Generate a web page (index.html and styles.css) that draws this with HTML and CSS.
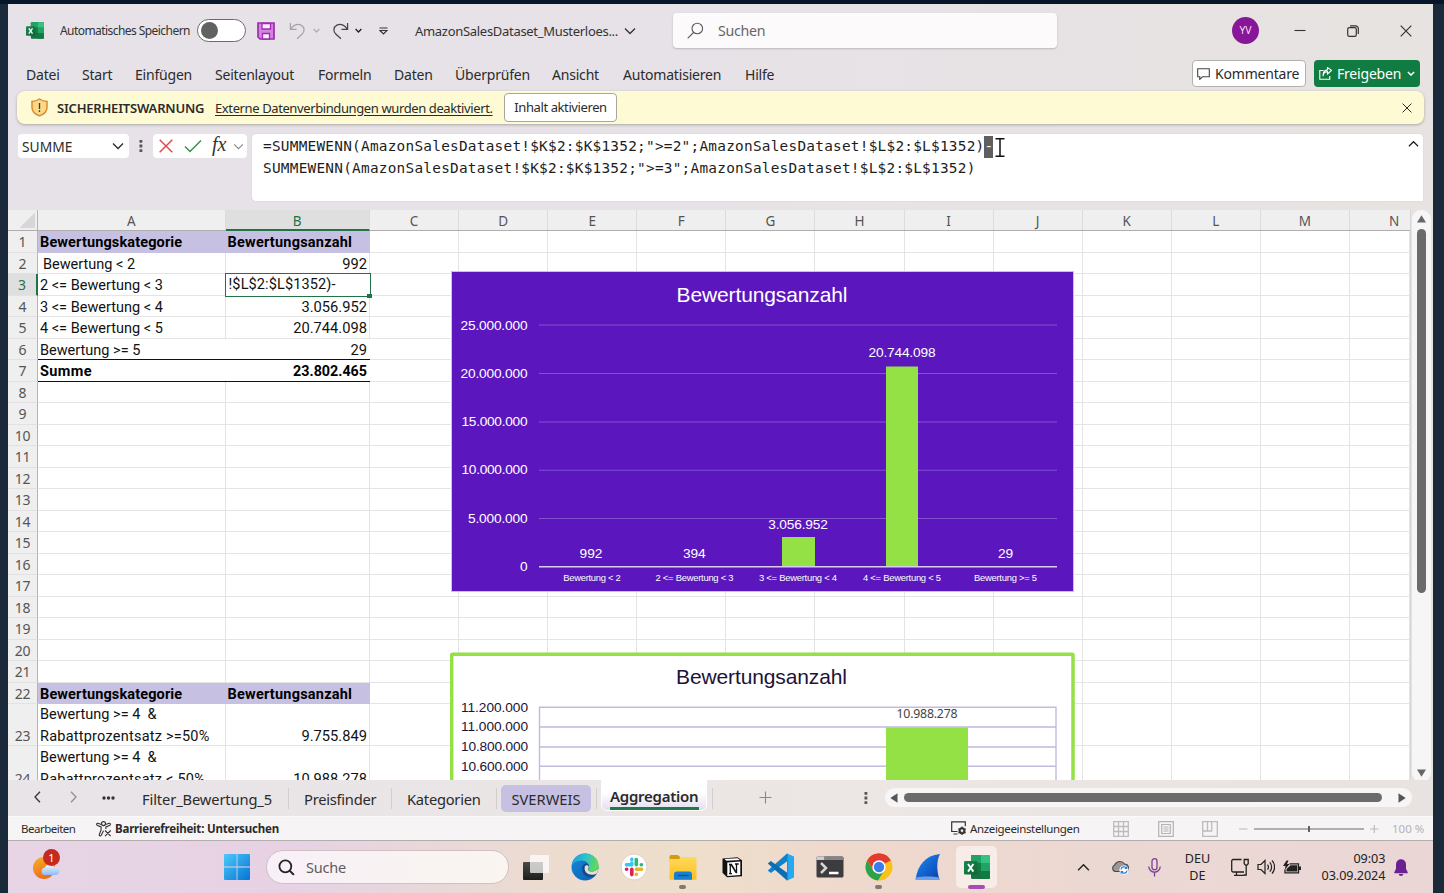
FILE: index.html
```html
<!DOCTYPE html>
<html lang="de">
<head>
<meta charset="utf-8">
<title>AmazonSalesDataset_Musterloesung - Excel</title>
<link rel="stylesheet" href="styles.css">
</head>
<body>
<svg class="defs" width="0" height="0">
  <defs>
    <linearGradient id="xlg" x1="0" y1="0" x2="1" y2="1"><stop offset="0" stop-color="#18884f"/><stop offset="1" stop-color="#0b6731"/></linearGradient>
    <linearGradient id="wing" x1="0" y1="0" x2="1" y2="1"><stop offset="0" stop-color="#4cc9fb"/><stop offset="1" stop-color="#0474d2"/></linearGradient>
    <linearGradient id="sung" x1="0" y1="0" x2=".4" y2="1"><stop offset="0" stop-color="#f6b02c"/><stop offset="1" stop-color="#ee6d1c"/></linearGradient>
    <linearGradient id="cldg" x1="0" y1="0" x2="0" y2="1"><stop offset="0" stop-color="#eef5fe"/><stop offset="1" stop-color="#8fbcf3"/></linearGradient>
    <linearGradient id="tv1" x1="0" y1="0" x2="0" y2="1"><stop offset="0" stop-color="#4a4a48"/><stop offset="1" stop-color="#1d1d1b"/></linearGradient>
    <linearGradient id="edg1" x1="0" y1=".3" x2="1" y2=".5"><stop offset="0" stop-color="#1b9de2"/><stop offset=".5" stop-color="#2fc2c9"/><stop offset="1" stop-color="#63dd4c"/></linearGradient>
    <linearGradient id="edg2" x1="0" y1="0" x2="1" y2="1"><stop offset="0" stop-color="#1389dc"/><stop offset="1" stop-color="#0d5cae"/></linearGradient>
    <linearGradient id="fold" x1="0" y1="0" x2="0" y2="1"><stop offset="0" stop-color="#ffd95a"/><stop offset="1" stop-color="#fbbf22"/></linearGradient>
    <linearGradient id="fin" x1="0" y1="0" x2="1" y2="1"><stop offset="0" stop-color="#1b8cf5"/><stop offset="1" stop-color="#0b3fae"/></linearGradient>
    <symbol id="excel" viewBox="0 0 26 26">
      <rect x="7" y="1" width="19" height="24" rx="1.500" fill="#1a6f43"/>
      <path d="M7 1h10v8H7z" fill="#21a366"/><path d="M17 1h7.500A1.500 1.500 0 0 1 26 2.500V9h-9z" fill="#33c481"/>
      <path d="M7 9h10v8H7z" fill="#107c41"/><path d="M17 9h9v8h-9z" fill="#21a366"/><path d="M17 17h9v6.500a1.500 1.500 0 0 1-1.500 1.500H17z" fill="#107c41"/>
      <rect x="0" y="7" width="13.500" height="13.500" rx="1.300" fill="url(#xlg)"/>
      <path d="M4 10l5.400 7.600M9.400 10L4 17.600" stroke="#fff" stroke-width="1.900" fill="none"/>
    </symbol>
    <symbol id="chev" viewBox="0 0 12 8"><path d="M1 1.500l5 5 5-5" fill="none" stroke="currentColor" stroke-width="1.300"/></symbol>
    <symbol id="chevb" viewBox="0 0 12 8"><path d="M1 1.500l5 5 5-5" fill="none" stroke="currentColor" stroke-width="2.400"/></symbol>
    <symbol id="cross" viewBox="0 0 12 12"><path d="M.7.7l10.600 10.600M11.300.7L.7 11.300" fill="none" stroke="currentColor" stroke-width="1.200"/></symbol>
  </defs>
</svg>

<div class="window">
  <header class="titlebar">
    <svg class="t-excel"><use href="#excel"/></svg>
    <span class="t-auto">Automatisches Speichern</span>
    <span class="toggle"><i></i></span>
    <svg class="t-save" viewBox="0 0 18 18"><path d="M1 1h16v16H3l-2-2z" fill="#cf86dc" stroke="#a02bb0" stroke-width="1.700"/><path d="M5 1.500h8.500v5.500H5zM5.500 11.500h7V17h-7z" fill="#f9eefb" stroke="#a02bb0" stroke-width="1.300"/></svg>
    <svg class="t-undo" viewBox="0 0 18 18"><path d="M1.500.5v6.800H8M1.700 7C4.500 2.800 9 .8 12.800 2.800c4 2.200 4 6.800 1.200 9.400L8.500 17.200" fill="none" stroke="#a5a2a5" stroke-width="1.300"/></svg>
    <svg class="t-ch1"><use href="#chevb"/></svg>
    <svg class="t-redo" viewBox="0 0 18 18"><path d="M16.500.5v6.800H10M16.300 7C13.500 2.800 9 .8 5.200 2.800c-4 2.200-4 6.800-1.200 9.400l5.500 5" fill="none" stroke="#444" stroke-width="1.300"/></svg>
    <svg class="t-ch2"><use href="#chevb"/></svg>
    <svg class="t-qat" viewBox="0 0 9 8"><path d="M.5 1h8M1 3.500l3.500 3.500L8 3.500z" fill="none" stroke="#333" stroke-width="1.200"/></svg>
    <span class="t-doc">AmazonSalesDataset_Musterloes...</span>
    <svg class="t-ch3"><use href="#chev"/></svg>
    <div class="search"><svg viewBox="0 0 17 17"><circle cx="10.300" cy="6.500" r="5.300" fill="none" stroke="#5b5b5b" stroke-width="1.100"/><path d="M6.500 10.500L.7 16.300" stroke="#5b5b5b" stroke-width="1.100"/></svg><span>Suchen</span></div>
    <span class="avatar">YV</span>
    <svg class="t-min" viewBox="0 0 12 12"><path d="M.5 5.500h11" stroke="#333" stroke-width="1.100"/></svg>
    <svg class="t-res" viewBox="0 0 12 12"><rect x=".7" y="2.700" width="8.600" height="8.600" rx="1.600" fill="none" stroke="#333" stroke-width="1.200"/><path d="M3 .8h5.500a2.800 2.800 0 0 1 2.800 2.800V9" fill="none" stroke="#333" stroke-width="1.200"/></svg>
    <svg class="t-close"><use href="#cross"/></svg>
  </header>

  <nav class="menu">
    <span>Datei</span><span>Start</span><span>Einfügen</span><span>Seitenlayout</span><span>Formeln</span><span>Daten</span><span>Überprüfen</span><span>Ansicht</span><span>Automatisieren</span><span>Hilfe</span>
    <div class="btn comments"><svg viewBox="0 0 13 12"><path d="M.7.8h11.600v8H5.500L2.800 11.300V8.800H.7z" fill="none" stroke="#444" stroke-width="1.100"/></svg><b>Kommentare</b></div>
    <div class="btn share"><svg viewBox="0 0 13 13"><path d="M4.500 3.500H.8v8.700h10V9M4 9.200c.3-3 2-4.500 4.500-4.600V7l4-3.600L8.500.6v2.300C5.500 3 4 5.500 4 9.200z" fill="none" stroke="#fff" stroke-width="1.100"/></svg><b>Freigeben</b><svg class="sc"><use href="#chevb"/></svg></div>
  </nav>

  <div class="warning">
    <svg class="shield" viewBox="0 0 17 19"><path d="M8.500 1c2.300 1.600 4.700 2.300 7.500 2.400v5.800c0 4.200-2.800 7-7.500 8.700C3.800 16.200 1 13.400 1 9.200V3.400C3.800 3.300 6.200 2.600 8.500 1z" fill="#fbd98a" stroke="#dd8a2c" stroke-width="1.500"/><path d="M8.500 5v6M8.500 12.300v1.700" stroke="#4b3a20" stroke-width="1.300"/></svg>
    <strong>SICHERHEITSWARNUNG</strong>
    <u>Externe Datenverbindungen wurden deaktiviert.</u>
    <span class="enable">Inhalt aktivieren</span>
    <svg class="wx"><use href="#cross"/></svg>
  </div>

  <div class="formula">
    <div class="namebox"><span>SUMME</span><svg><use href="#chev"/></svg></div>
    <svg class="vdots" viewBox="0 0 4 14"><path d="M.5 1h2.800v2.800H.5zM.5 5.600h2.800v2.800H.5zM.5 10.200h2.800V13H.5z" fill="#555"/></svg>
    <div class="fx">
      <svg class="no" viewBox="0 0 14 14"><path d="M.7.7l12.600 12.600M13.300.7L.7 13.300" stroke="#e2434b" stroke-width="1.400"/></svg>
      <svg class="ok" viewBox="0 0 18 14"><path d="M1 7.500L6 12.500 17 1.500" fill="none" stroke="#35914f" stroke-width="1.500"/></svg>
      <em>fx</em>
      <svg class="fc"><use href="#chev"/></svg>
    </div>
    <div class="input">
      <div>=SUMMEWENN(AmazonSalesDataset!$K$2:$K$1352;"&gt;=2";AmazonSalesDataset!$L$2:$L$1352)<mark>-</mark><svg class="ibeam" viewBox="0 0 10 19"><path d="M.5.8h9M.5 18.200h9M5 1v17" fill="none" stroke="#111" stroke-width="1.500"/></svg></div>
      <div>SUMMEWENN(AmazonSalesDataset!$K$2:$K$1352;"&gt;=3";AmazonSalesDataset!$L$2:$L$1352)</div>
      <svg class="collapse"><use href="#chev"/></svg>
    </div>
  </div>

  <div class="work">
    <div class="sheet">
      <div class="cols"><b class="corner"></b><span>A</span><span class="on">B</span><span>C</span><span>D</span><span>E</span><span>F</span><span>G</span><span>H</span><span>I</span><span>J</span><span>K</span><span>L</span><span>M</span><span>N</span></div>
      <div class="row head"><b>1</b><i>Bewertungskategorie</i><i>Bewertungsanzahl</i><i></i></div>
      <div class="row"><b>2</b><i class="ind">Bewertung &lt; 2</i><i>992</i><i></i></div>
      <div class="row"><b class="on">3</b><i>2 &lt;= Bewertung &lt; 3</i><i class="edit">!$L$2:$L$1352)-</i><i></i></div>
      <div class="row"><b>4</b><i>3 &lt;= Bewertung &lt; 4</i><i>3.056.952</i><i></i></div>
      <div class="row"><b>5</b><i>4 &lt;= Bewertung &lt; 5</i><i>20.744.098</i><i></i></div>
      <div class="row line"><b>6</b><i>Bewertung &gt;= 5</i><i>29</i><i></i></div>
      <div class="row line sum"><b>7</b><i>Summe</i><i>23.802.465</i><i></i></div>
      <div class="row"><b>8</b><i></i><i></i><i></i></div>
      <div class="row"><b>9</b><i></i><i></i><i></i></div>
      <div class="row"><b>10</b><i></i><i></i><i></i></div>
      <div class="row"><b>11</b><i></i><i></i><i></i></div>
      <div class="row"><b>12</b><i></i><i></i><i></i></div>
      <div class="row"><b>13</b><i></i><i></i><i></i></div>
      <div class="row"><b>14</b><i></i><i></i><i></i></div>
      <div class="row"><b>15</b><i></i><i></i><i></i></div>
      <div class="row"><b>16</b><i></i><i></i><i></i></div>
      <div class="row"><b>17</b><i></i><i></i><i></i></div>
      <div class="row"><b>18</b><i></i><i></i><i></i></div>
      <div class="row"><b>19</b><i></i><i></i><i></i></div>
      <div class="row"><b>20</b><i></i><i></i><i></i></div>
      <div class="row"><b>21</b><i></i><i></i><i></i></div>
      <div class="row head"><b>22</b><i>Bewertungskategorie</i><i>Bewertungsanzahl</i><i></i></div>
      <div class="row tall"><b>23</b><i>Bewertung &gt;= 4&nbsp; &amp;<br><span>Rabattprozentsatz &gt;=50%</span></i><i>9.755.849</i><i></i></div>
      <div class="row tall last"><b>24</b><i>Bewertung &gt;= 4&nbsp; &amp;<br><span>Rabattprozentsatz &lt; 50%</span></i><i>10.988.278</i><i></i></div>

      <svg class="chart one" viewBox="451 271 623 321" width="623" height="321">
        <rect x="451.500" y="271.500" width="622" height="320" fill="#5b17bd" stroke="#c9c3dc"/>
        <path d="M539 325h518M539 373.500h518M539 422h518M539 470.300h518M539 518.500h518" stroke="#8350d0" stroke-width="1.100"/>
        <rect x="782" y="537" width="33" height="30" fill="#93e145"/>
        <rect x="886" y="366.500" width="32" height="200" fill="#93e145"/>
        <path d="M539 566.700h518" stroke="#d8cdee" stroke-width="1.500"/>
        <g fill="#fff">
          <text class="ttl" x="762" y="302" text-anchor="middle" textLength="171">Bewertungsanzahl</text>
          <g class="ax" text-anchor="end">
            <text x="527.500" y="329.500" textLength="67">25.000.000</text><text x="527.500" y="377.800" textLength="67">20.000.000</text><text x="527.500" y="426" textLength="66">15.000.000</text><text x="527.500" y="474.300" textLength="66">10.000.000</text><text x="527.500" y="523" textLength="59.500">5.000.000</text><text x="527.500" y="571.300">0</text>
          </g>
          <g class="ax" text-anchor="middle">
            <text x="591" y="558">992</text><text x="694.300" y="558">394</text><text x="798" y="528.500" textLength="59.500">3.056.952</text><text x="902" y="357" textLength="67">20.744.098</text><text x="1005.500" y="558">29</text>
          </g>
          <g class="cat" text-anchor="middle">
            <text x="592" y="581" textLength="57.500">Bewertung &lt; 2</text><text x="694.500" y="581" textLength="78">2 &lt;= Bewertung &lt; 3</text><text x="798" y="581" textLength="78">3 &lt;= Bewertung &lt; 4</text><text x="902" y="581" textLength="78">4 &lt;= Bewertung &lt; 5</text><text x="1005.500" y="581" textLength="63">Bewertung &gt;= 5</text>
          </g>
        </g>
      </svg>

      <svg class="chart two" viewBox="450 652 625 140" width="625" height="140">
        <rect x="451.700" y="654.200" width="621.300" height="160" rx="1" fill="#fff" stroke="#93e145" stroke-width="3.500"/>
        <path d="M539.500 800V707.300H1056V800M539 727h517M539 747h517M539 766.300h517" fill="none" stroke="#c0bbdf" stroke-width="1.400"/>
        <rect x="886" y="727.500" width="82" height="70" fill="#93e145"/>
        <g fill="#1d1238">
          <text class="ttl" x="761.500" y="684" text-anchor="middle" textLength="171">Bewertungsanzahl</text>
          <g class="ax" text-anchor="end"><text x="528" y="711.700" textLength="67">11.200.000</text><text x="528" y="731" textLength="67">11.000.000</text><text x="528" y="751" textLength="67">10.800.000</text><text x="528" y="771" textLength="67">10.600.000</text></g>
        </g>
        <text class="val" x="927" y="717.500" text-anchor="middle" textLength="61" fill="#444">10.988.278</text>
      </svg>
    </div>
    <div class="vscroll"><svg viewBox="0 0 10 8"><path d="M5 .3L9.500 7.500H.5z" fill="#666"/></svg><i></i><svg class="dn" viewBox="0 0 10 8"><path d="M5 7.700L9.500.5H.5z" fill="#666"/></svg></div>
  </div>

  <div class="tabs">
    <svg class="prev" viewBox="0 0 7 12"><path d="M6 .8L1 6l5 5.200" fill="none" stroke="#333" stroke-width="1.300"/></svg>
    <svg class="next" viewBox="0 0 7 12"><path d="M1 .8L6 6l-5 5.200" fill="none" stroke="#8f8f8f" stroke-width="1.300"/></svg>
    <svg class="more" viewBox="0 0 13 4"><circle cx="2" cy="2" r="1.700"/><circle cx="6.500" cy="2" r="1.700"/><circle cx="11" cy="2" r="1.700"/></svg>
    <span class="tb f">Filter_Bewertung_5</span><span class="tb p">Preisfinder</span><span class="tb k">Kategorien</span>
    <span class="sv">SVERWEIS</span><span class="sep"></span><span class="ag"><b>Aggregation</b></span><span class="sep"></span>
    <svg class="plus" viewBox="0 0 13 13"><path d="M6.500.5v12M.5 6.500h12" stroke="#8b8889" stroke-width="1.100"/></svg>
    <svg class="vdots" viewBox="0 0 4 14"><path d="M.5 1h2.800v2.800H.5zM.5 5.600h2.800v2.800H.5zM.5 10.200h2.800V13H.5z" fill="#555"/></svg>
    <div class="hscroll"><svg viewBox="0 0 8 10"><path d="M.3 5L7.500.3v9.400z" fill="#555"/></svg><i></i><svg viewBox="0 0 8 10"><path d="M7.700 5L.5.3v9.400z" fill="#555"/></svg></div>
  </div>

  <div class="status">
    <span class="s-edit">Bearbeiten</span>
    <svg class="s-acc" viewBox="0 0 16 16"><g fill="none" stroke="#333" stroke-width="1.100"><circle cx="7.500" cy="2.600" r="2"/><path d="M5.300 3.600L2 2.300C.3 2 .2 4 1.500 4.500l3.600 1.400v3L3.300 13.500c-.3 1.600 1.600 1.900 2 .7l2.200-4.400M9.700 3.600L13 2.300c1.700-.3 1.800 1.700.5 2.200L9.900 5.900V8M9 9.500l5.700 5.700M14.700 9.500L9 15.200"/></g></svg>
    <b>Barrierefreiheit: Untersuchen</b>
    <svg class="s-disp" viewBox="0 0 16 15"><path d="M6.500 10.500H.7V.8h13.600v4.400M2.500 13h4" fill="none" stroke="#333" stroke-width="1.200"/><circle cx="11" cy="9.800" r="2.600" fill="none" stroke="#333" stroke-width="1.800"/><path d="M11 5.500v8.600M7.300 7.700l7.400 4.200M14.700 7.700l-7.400 4.200" stroke="#333" stroke-width="1.200"/><circle cx="11" cy="9.800" r="1.200" fill="#f5f3f4"/></svg>
    <span class="s-an">Anzeigeeinstellungen</span>
    <svg class="s-v1" viewBox="0 0 16 16"><path d="M.7.7h14.600v14.600H.7zM5.500.7v14.600M10.500.7v14.600M.7 5.500h14.600M.7 10.500h14.600" fill="none" stroke="#bdbbbc" stroke-width="1.300"/></svg>
    <svg class="s-v2" viewBox="0 0 16 16"><path d="M.7.7h14.600v14.600H.7zM3.700 3.500h8.600v9H3.700zM5.500 6h5M5.500 8h5M5.500 10h5" fill="none" stroke="#b5b3b4" stroke-width="1.200"/></svg>
    <svg class="s-v3" viewBox="0 0 16 16"><path d="M.7.7h14.600v14.600H.7zM.7 10h9V.7M5.500.7V10" fill="none" stroke="#bdbbbc" stroke-width="1.300"/></svg>
    <svg class="s-zoom" viewBox="0 0 140 12"><path d="M0 6h8.500M131 6h8.500M135.300 2v8" stroke="#b9b7b8" stroke-width="1.100"/><path d="M15 6h110" stroke="#6a6869" stroke-width="1.200"/><path d="M70 3v6" stroke="#555" stroke-width="1.800"/></svg>
    <span class="s-pct">100 %</span>
  </div>
</div>

<footer class="taskbar">
  <div class="weather"><svg viewBox="0 0 30 32"><circle cx="12" cy="19" r="11" fill="url(#sung)"/><path d="M12 26a4 4 0 0 1 .8-7.600 5.500 5.500 0 0 1 9.500-.4 4 4 0 0 1 1.700 8z" fill="url(#cldg)"/></svg><span>1</span></div>
  <svg class="win" viewBox="0 0 26 26"><path d="M0 1a1 1 0 0 1 1-1h11.600v12.600H0zM13.400 0H25a1 1 0 0 1 1 1v11.600H13.400zM0 13.400h12.600V26H1a1 1 0 0 1-1-1zM13.400 13.400H26V25a1 1 0 0 1-1 1H13.400z" fill="url(#wing)"/></svg>
  <div class="tsearch"><svg viewBox="0 0 18 18"><circle cx="7.800" cy="7.800" r="6.300" fill="none" stroke="#222" stroke-width="1.900"/><path d="M12.300 12.300l4.500 4.500" stroke="#222" stroke-width="2.200"/></svg><span>Suche</span></div>
  <div class="apps">
    <span><svg viewBox="0 0 28 28"><rect x="1" y="9" width="20" height="18" rx="1" fill="url(#tv1)"/><rect x="8" y="2" width="19" height="18" rx="1" fill="#fff" fill-opacity=".72"/></svg></span>
    <span><svg viewBox="0 0 28 28"><circle cx="14" cy="14" r="13.500" fill="url(#edg2)"/><path d="M.6 13C1.500 5.500 7 .5 14 .5c8 0 13.500 5.500 13.500 11.500 0 4-3 6.300-6.500 6.300-2.500 0-4-.8-4-2 0-.8.8-1.300.8-3C17.800 10.500 15 7.500 10.500 7.500 5.500 7.500 1.500 10.500.6 13z" fill="url(#edg1)"/><path d="M17.500 11.500c-2-2-6-.5-6.500 3.500-.5 5.500 4 9.500 9 9 2-.3 4.500-1.500 5.500-3-4.500 1.500-9.500.5-8.500-4.500.8-1 1.300-3 .5-5z" fill="#114a8b"/><path d="M13.800 13.500c.8-1.600 3.300-1.500 3.900.2.300 1-.8 1.700-.8 2.600 0 2.500 6.500 4 10.500-1-.3 1.900-.8 3.700-1.700 5.200-5 3-13.500.5-11.900-7z" fill="#ecdccb"/></svg></span>
    <span><svg viewBox="0 0 28 28"><circle cx="14" cy="14" r="13" fill="#fff" stroke="#ddd0c8"/><g stroke-width="3.600" stroke-linecap="round"><path d="M11.800 10.500V10M6.500 11.800h5.300" stroke="#36c5f0"/><path d="M11.800 6.400v.2" stroke="#36c5f0"/><path d="M16.300 6.500v5.300M21.500 11.800h-.2" stroke="#2eb67d"/><path d="M16.300 16.300h5.300M16.300 21.500v-.2" stroke="#ecb22e"/><path d="M11.800 16.300v5.300M6.500 16.300h.2" stroke="#e01e5a"/></g></svg></span>
    <span class="run"><svg viewBox="0 0 28 28"><path d="M.5 3.500a1.500 1.500 0 0 1 1.500-1.500h7l2.500 2.500V8H.5z" fill="#d9990c"/><path d="M.5 6H10l2-2h14a1.500 1.500 0 0 1 1.500 1.500v20.500a.8.8 0 0 1-.8.800H1.300a.8.8 0 0 1-.8-.8z" fill="url(#fold)"/><path d="M5 26.800V21.500a3 3 0 0 1 3-3h12a3 3 0 0 1 3 3v5.300z" fill="#167fd0"/><path d="M8.500 22.500h11" stroke="#07549b" stroke-width="1.300"/></svg></span>
    <span><svg viewBox="0 0 28 28"><path d="M4.500 5.500L19.500 4.300l4.500 3v16L9 24.300l-4.500-4.500z" fill="#111"/><path d="M9.300 9.500l13-.9v13.500l-13 .8zM6.500 6l13-.8 2.500 1.700-13.500.9z" fill="#fff"/><path d="M11 11.500h3M18.500 11v9.300M12.300 11.800v9M11 20.700h3M17 11h3.700" stroke="#111" stroke-width="1.300" fill="none"/><path d="M12.300 11.500h2l5 8.500h-1.800z" fill="#111"/></svg></span>
    <span><svg viewBox="0 0 28 28"><path d="M20 .5l7 3v21l-7 3z" fill="#24a9f2"/><path d="M20 .5L.8 17.500l3 2.500L20.500 8z" fill="#1282c8"/><path d="M20 27.500L.8 10.500l3-2.500L20.500 20z" fill="#0c6cb4"/><path d="M20 .5v27l1-.5V1z" fill="#1a90d8"/></svg></span>
    <span><svg viewBox="0 0 28 28"><rect x=".5" y="3.500" width="27" height="21" rx="1.500" fill="#3c3c3e"/><path d="M2 3.500h6.500v3.500H.5V5A1.500 1.500 0 0 1 2 3.500z" fill="#cfcfcf"/><path d="M8.500 3.500H26A1.500 1.500 0 0 1 27.500 5v2h-19z" fill="#858585"/><path d="M5 10l5 5-5 5" stroke="#d6d6d6" stroke-width="2.500" fill="none"/><path d="M13 20h9.500" stroke="#fff" stroke-width="2.500"/></svg></span>
    <span class="run"><svg viewBox="0 0 28 28"><circle cx="14" cy="14" r="13.500" fill="#fbc116"/><path d="M14 14L2.300 7.250A13.500 13.500 0 0 1 25.700 7.250z" fill="#e33b2e"/><path d="M14 7.500h11.800A13.500 13.500 0 0 0 2.300 7.250L8.400 17.500z" fill="#e33b2e"/><path d="M2.300 7.250A13.500 13.500 0 0 0 13 27.500l6.200-10-5.200 3-5.600-2.800z" fill="#2ca24c"/><circle cx="14" cy="14" r="6.700" fill="#fff"/><circle cx="14" cy="14" r="5.200" fill="#3b7ded"/></svg></span>
    <span><svg viewBox="0 0 28 28"><path d="M1.500 26.500C4 12 11 2.500 26 1c-3.500 6.500-3.500 16-.5 25.500z" fill="url(#fin)"/><path d="M1.500 26.500l.6-2c7-1.300 16-1.300 22.800 0l.6 2z" fill="#6c9fe6"/></svg></span>
    <span class="act"><svg><use href="#excel"/></svg></span>
  </div>
  <div class="tray">
    <svg class="y-up"><use href="#chev"/></svg>
    <svg class="y-cl" viewBox="0 0 18 15"><path d="M4 11.500a3.500 3.500 0 0 1-.3-6.500A5.500 5.500 0 0 1 13.500 4a4 4 0 0 1 2 7.500z" fill="#9b9896" stroke="#4a4847" stroke-width="1.100"/><circle cx="13" cy="10" r="4.600" fill="#fff"/><path d="M10 9.500a3 3 0 0 1 5.500-1.300M16 10.500a3 3 0 0 1-5.500 1.300M15.800 6.500v2h-2M10.200 13.500v-2h2" fill="none" stroke="#2580d8" stroke-width="1.200"/></svg>
    <svg class="y-mic" viewBox="0 0 13 19"><rect x="4" y=".7" width="5" height="11" rx="2.500" fill="none" stroke="#7d3f94" stroke-width="1.300"/><path d="M.8 8.500a5.700 5.700 0 0 0 11.400 0M6.500 14.500v4" fill="none" stroke="#7d3f94" stroke-width="1.300"/></svg>
    <div class="lang">DEU<br>DE</div>
    <svg class="y-net" viewBox="0 0 18 18"><path d="M10.500 1.500H2.200A1.500 1.500 0 0 0 .7 3v9.500A1.500 1.500 0 0 0 2.200 14H13M5.500 14v3M3 17.300h10M13.200 1.500h4v4.200l-1.300 1.500h-1.400l-1.300-1.500zM15.200 7v10h-2.500" fill="none" stroke="#222" stroke-width="1.300"/></svg>
    <svg class="y-snd" viewBox="0 0 18 16"><path d="M1 5.500h3L8 1.500v13l-4-4H1zM10.500 5.500a4 4 0 0 1 0 5M12.800 3.300a7 7 0 0 1 0 9.400M15 1.300a10 10 0 0 1 0 13.400" fill="none" stroke="#222" stroke-width="1.200"/></svg>
    <svg class="y-bat" viewBox="0 0 18 15"><path d="M6.500 3.800h9v9H2V9.500" fill="none" stroke="#222" stroke-width="1.300"/><path d="M7.500 5.300h6.800v6.200H3.500V9zM16 6.500h2v3.500h-2zM3.500.5L0 6h2.500l-.8 4L6.500 4H4l1.500-3.500z" fill="#222"/></svg>
    <div class="clock">09:03<br>03.09.2024</div>
    <svg class="y-bell" viewBox="0 0 14 17"><path d="M7 .3a5 5 0 0 0-5 5v4.500L.3 13.200v1h13.400v-1L12 9.800V5.300a5 5 0 0 0-5-5zM4.800 15a2.200 2 0 0 0 4.400 0z" fill="#6c2191"/></svg>
  </div>
</footer>
</body>
</html>
```
FILE: styles.css
```css
* { box-sizing: border-box; }
body {
  margin: 0; width: 1444px; height: 893px; overflow: hidden;
  padding: 4px 11px 0 8px;
  background: linear-gradient(#06152a 4px, #1b2a3a 4px);
  font-family: "Noto Sans", "Open Sans", sans-serif; color: #2b2b2b;
}
svg { flex: none; display: block; }
span, b, u, strong { white-space: nowrap; }
.defs { position: absolute; }
.window { height: 837px; background: linear-gradient(90deg, #e6e2e8, #e6e2e7 50%, #e7e3e0); display: flex; flex-direction: column; }

/* title bar */
.titlebar { height: 53px; display: flex; align-items: center; padding-left: 18px; color: #333; }
.t-excel { width: 18px; height: 19px; }
.t-auto { width: 130px; margin-left: 16px; font-size: 12px; letter-spacing: -.56px; }
.toggle { width: 49px; height: 23px; margin-left: 7px; border: 1px solid #6b6b6b; border-radius: 12px; background: #fff; padding: 2px 3px; }
.toggle i { display: block; width: 17px; height: 17px; border-radius: 50%; background: #616161; }
.t-save { width: 18px; height: 18px; margin-left: 11px; }
.t-undo { width: 17px; height: 18px; margin-left: 14px; }
.t-ch1 { width: 7px; height: 5px; margin-left: 7px; color: #b3b0b3; }
.t-redo { width: 17px; height: 18px; margin-left: 12px; }
.t-ch2 { width: 7px; height: 5px; margin-left: 6px; color: #222; }
.t-qat { width: 9px; height: 8px; margin-left: 17px; }
.t-doc { width: 203px; margin-left: 27px; font-size: 13px; letter-spacing: -.3px; }
.t-ch3 { width: 12px; height: 8px; margin-left: 6px; }
.search { width: 384px; height: 35px; margin-left: 37px; border-radius: 4px; background: #fcfafb; box-shadow: 0 1px 2px #b9b5b9; display: flex; align-items: center; color: #666; font-size: 14.200px; letter-spacing: -.3px; }
.search svg { width: 17px; height: 17px; margin-left: 14px; }
.search span { margin-left: 14px; }
.avatar { width: 27px; height: 27px; margin-left: 175px; border-radius: 50%; background: #871798; color: #f3dcf5; font-size: 10.500px; line-height: 27px; text-align: center; }
.t-min { width: 12px; height: 12px; margin-left: 35px; }
.t-res { width: 12px; height: 12px; margin-left: 41px; }
.t-close { width: 12px; height: 12px; margin-left: 41px; }

/* ribbon tabs */
.menu { height: 34px; display: flex; align-items: center; padding: 0 0 0 18px; font-size: 14px; letter-spacing: -.2px; }
.menu > span { flex: none; margin-right: 23px; }
.menu span:nth-of-type(1) { width: 33px; }
.menu span:nth-of-type(2) { width: 30px; }
.menu span:nth-of-type(3) { width: 57px; }
.menu span:nth-of-type(4) { width: 80px; }
.menu span:nth-of-type(5) { width: 53px; }
.menu span:nth-of-type(6) { width: 38px; }
.menu span:nth-of-type(7) { width: 74px; }
.menu span:nth-of-type(8) { width: 48px; }
.menu span:nth-of-type(9) { width: 99px; }
.menu span:nth-of-type(10) { width: 30px; }
.btn { height: 27px; border-radius: 4px; display: flex; align-items: center; margin-top: -1px; }
.btn b { font-weight: 400; letter-spacing: -.2px; }
.comments { width: 114px; margin-left: 394px; background: #fff; border: 1px solid #b3b0b0; padding-left: 4px; }
.comments svg { width: 13px; height: 12px; margin-right: 5px; }
.share { width: 106px; margin-left: 8px; background: #107c41; color: #fff; padding-left: 5px; }
.share svg { width: 13px; height: 13px; margin-right: 5px; }
.share .sc { width: 8px; height: 5px; margin: 0 0 0 6px; }

/* message bar */
.warning { height: 33px; margin: 0 9px; border-radius: 8px; background: #fdfad4; box-shadow: 0 1px 3px #aaa6a3; display: flex; align-items: center; padding-left: 14px; font-size: 13px; }
.shield { width: 17px; height: 19px; }
.warning strong { width: 148px; margin-left: 9px; font-weight: 600; letter-spacing: -.2px; }
.warning u { width: 278px; margin-left: 10px; text-underline-offset: 2px; letter-spacing: -.39px; }
.enable { width: 113px; height: 29px; margin-left: 11px; border: 1px solid #a9a79b; border-radius: 4px; background: #fff; text-align: center; line-height: 26px; letter-spacing: -.4px; }
.wx { width: 10px; height: 10px; margin-left: 785px; }

/* formula bar */
.formula { display: flex; align-items: flex-start; height: 86px; padding: 10px 10px 0 10px; }
.namebox { width: 111px; height: 24px; border-radius: 4px; background: #fff; display: flex; align-items: center; justify-content: space-between; padding: 0 5px 0 4px; font-size: 13.800px; }
.namebox svg { width: 12px; height: 8px; }
.vdots { width: 4px; height: 14px; }
.formula .vdots { margin: 5px 0 0 10px; }
.fx { width: 94px; height: 24px; margin-left: 10px; border-radius: 4px; background: #fff; display: flex; align-items: center; }
.no { width: 14px; height: 14px; margin-left: 6px; }
.ok { width: 18px; height: 14px; margin-left: 11px; }
.fx em { margin: -3px 0 0 10px; width: 17px; font: italic 20px "Liberation Serif", serif; color: #333; }
.fc { width: 11px; height: 7px; margin-left: 4px; color: #888; }
.input { flex: 1; height: 67px; margin-left: 5px; position: relative; border-radius: 4px 4px 0 4px; background: #fff; box-shadow: 0 0 1px #b9b5b5; padding: 2px 0 0 11px; font: 14.400px/21.500px "DejaVu Sans Mono", monospace; letter-spacing: .243px; color: #1d1d1d; white-space: nowrap; }
.input div { display: flex; }
.input mark { background: #5f5f5f; color: #fff; height: 22px; }
.ibeam { width: 10px; height: 19px; margin: 2px 0 0 2px; }
.collapse { position: absolute; right: 4px; top: 6px; width: 11px; height: 8px; transform: scaleY(-1); }

/* worksheet */
.work { height: 570px; display: flex; }
.sheet { width: 1403px; position: relative; overflow: hidden; background: #fff; border-right: 1px solid #d7d5d6; font: 14.500px Roboto, sans-serif; color: #111; }
.cols { display: flex; height: 21px; background: #f0eff0; border-bottom: 1px solid #b0aeaf; font: 13.500px/22px "Noto Sans", sans-serif; color: #555; }
.cols span { flex: none; width: 89.100px; text-align: center; border-right: 1px solid #dddbdc; }
.cols .corner { flex: none; width: 30px; border-right: 1px solid #b5b3b4; background: linear-gradient(135deg, transparent 50%, #d8d6d7 50%) 12px 3px / 15px 15px no-repeat; }
.cols span:nth-of-type(1) { width: 187.500px; }
.cols span:nth-of-type(2) { width: 144.500px; }
.cols .on { background: #e0dfe0; color: #217346; height: 21px; border-bottom: 2px solid #217346; }
.row { display: flex; height: 21.520px; line-height: 22px; white-space: nowrap; }
.row b { flex: none; width: 30px; background: #f0eff0; border-right: 1px solid #b5b3b4; border-bottom: 1px solid #e3e1e2; font: 14px/21.500px "Noto Sans", sans-serif; letter-spacing: -.2px; color: #555; text-align: center; }
.row .on { background: #e0dfe0; color: #217346; border-right: 2px solid #217346; }
.row i { flex: none; font-style: normal; border-right: 1px solid #e4e4e4; border-bottom: 1px solid #e4e4e4; }
.row i:nth-of-type(1) { width: 187.500px; padding-left: 2px; line-height: 23.500px; }
.row i:nth-of-type(2) { width: 144.500px; padding-right: 2px; text-align: right; font-size: 14.700px; }
.row i:nth-of-type(3) { width: 1040px; background: repeating-linear-gradient(90deg, transparent 0 88.100px, #e4e4e4 88.100px 89.100px); }
.row .ind { text-indent: 3px; }
.row.head i:nth-of-type(-n+2) { background: #c6c0e3; border-color: #c6c0e3; font-weight: 700; font-size: 14.500px; letter-spacing: .13px; line-height: 23.500px; color: #000; }
.row.head i:nth-of-type(2) { text-align: left; padding-left: 2px; letter-spacing: .22px; }
.row.line i:nth-of-type(-n+2) { border-color: transparent; box-shadow: 0 1px #111; border-bottom: 0; height: 20.520px; }
.row.sum i:nth-of-type(-n+2) { font-weight: 700; color: #000; }
.row.sum i:nth-of-type(1) { letter-spacing: .4px; }
.row.sum i:nth-of-type(2) { font-size: 14.300px; }
.row .edit.edit.edit { text-align: left; outline: 1.500px solid #217346; padding-left: 3px; border: 0; font-size: 14.500px; letter-spacing: .12px; position: relative; }
.edit::after { content: ""; position: absolute; right: -2px; bottom: -2px; width: 5px; height: 4px; background: #217346; }
.row.tall { height: 41.500px; }
.row.tall + .tall { height: 43px; }
.row.tall i:nth-of-type(1) { line-height: 21.500px; }
.tall i span { letter-spacing: .23px; }
.row.tall b, .row.tall i:nth-of-type(2) { padding-top: 21px; }
.row.last i:nth-of-type(1) { padding-top: 1.500px; }
.row.last b, .row.last i:nth-of-type(2) { padding-top: 22.500px; }
.chart { position: absolute; font-family: "Liberation Sans", sans-serif; }
.chart.one { left: 443px; top: 61px; }
.chart.two { left: 442px; top: 442px; }
.ttl { font-size: 21px; }
.ax { font-size: 13.700px; }
.cat { font-size: 9.400px; }
.val { font: 12.300px "Noto Sans", sans-serif; }
.vscroll { width: 19px; height: 572px; margin-left: 1px; border-radius: 9px; background: #f7f6f6; display: flex; flex-direction: column; align-items: center; padding: 5px 0; }
.vscroll svg { width: 11px; height: 8px; }
.vscroll i { width: 9px; height: 364px; margin-top: 6px; border-radius: 5px; background: #6b6b6b; }
.vscroll .dn { margin-top: auto; }

/* sheet tabs */
.tabs { height: 36px; display: flex; align-items: flex-start; font-size: 14.700px; background: linear-gradient(90deg, #e8e4e8, #ece6e4 60%, #e8e2e0); }
.tabs svg { margin-top: 11px; }
.prev { width: 7px; height: 12px; margin-left: 26px; }
.next { width: 7px; height: 12px; margin-left: 29px; }
.more { width: 13px; height: 4px; margin-left: 25px; fill: #333; }
.tabs .more { margin-top: 16px; }
.tb { height: 21px; line-height: 23px; margin-top: 8px; padding-left: 15px; border-right: 1px solid #d2cdcf; flex: none; letter-spacing: -.25px; }
.tb.f { width: 162px; margin-left: 12px; letter-spacing: -.12px; }
.tb.p { width: 103px; }
.tb.k { width: 105px; }
.sv { width: 90px; height: 27px; margin: 5px 0 0 4px; border-radius: 5px; background: #c6c0e3; text-align: center; line-height: 29px; letter-spacing: 0; }
.sep { width: 1px; height: 21px; margin: 8px 4px 0 5px; background: #d2cdcf; }
.ag { width: 106px; height: 31px; background: linear-gradient(#fff 40%, #e3def0); border: 1px solid #fff; border-radius: 0 0 6px 6px; padding: 5px 7px 0 8px; }
.ag b { display: block; height: 24px; border-bottom: 3px solid #1f7a4a; font-weight: 600; line-height: 20px; font-size: 15px; letter-spacing: -.25px; }
.tabs .plus { width: 13px; height: 13px; margin-left: 42px; }
.tabs .vdots { margin-left: 92px; }
.hscroll { width: 527px; height: 19px; margin: 8px 0 0 17px; border-radius: 9px; background: #f7f5f5; display: flex; align-items: center; padding: 0 5px; }
.hscroll svg { width: 8px; height: 10px; margin: 0; }
.hscroll i { width: 478px; height: 9px; margin: 0 16px 0 6px; border-radius: 5px; background: #6b6b6b; }

/* status bar */
.status { height: 25px; display: flex; align-items: center; padding-left: 13px; background: #f6f4f5; border-top: 1px solid #fbfafa; border-bottom: 1px solid #b4adae; font-size: 11.500px; }
.s-edit { width: 54px; letter-spacing: -.5px; }
.s-acc { width: 16px; height: 16px; margin-left: 21px; }
.status b { width: 165px; margin-left: 3px; letter-spacing: -.2px; }
.s-disp { width: 16px; height: 15px; margin-left: 671px; }
.s-an { width: 109px; margin-left: 3px; letter-spacing: -.35px; }
.s-v1, .s-v2, .s-v3 { width: 16px; height: 16px; }
.s-v1 { margin-left: 34px; }
.s-v2 { margin-left: 29px; }
.s-v3 { margin-left: 28px; }
.s-zoom { width: 140px; height: 12px; margin-left: 21px; }
.s-pct { margin-left: 13px; color: #b5b3b4; }

/* taskbar */
.taskbar { height: 52px; display: flex; align-items: center; background: linear-gradient(90deg, #e7d4e5, #e6d2e3 20%, #ecdcd0 38%, #eedfcb 48%, #efd9cd 58%, #ecd8d2 75%, #ead6d6); }
.weather { width: 30px; height: 32px; margin: -5px 0 0 24px; position: relative; }
.weather svg { width: 30px; height: 32px; }
.weather span { position: absolute; left: 11px; top: 0; width: 17px; height: 17px; border-radius: 50%; background: #c42b1c; color: #fff; font-size: 11px; line-height: 17px; text-align: center; }
.win { width: 26px; height: 26px; margin-left: 162px; }
.tsearch { width: 243px; height: 34px; margin-left: 16px; border: 1px solid #cfc0c6; border-radius: 17px; background: linear-gradient(90deg, #f8f0f7, #faf5f0); display: flex; align-items: center; font-size: 14.500px; letter-spacing: -.2px; color: #5f5b5e; }
.tsearch svg { width: 17px; height: 17px; margin-left: 11px; }
.tsearch span { margin-left: 11px; }
.apps { display: flex; margin-left: 6px; }
.apps span { width: 41px; height: 42px; margin-right: 8.050px; border-radius: 5px; display: flex; align-items: center; justify-content: center; position: relative; }
.apps svg { width: 28px; height: 28px; }
.apps .run::after, .apps .act::after { content: ""; position: absolute; bottom: -1px; left: 17px; width: 7px; height: 4px; border-radius: 2px; background: #85776f; }
.apps .act { background: #f8ece8; margin-right: 0; }
.apps .act svg { width: 26px; height: 26px; }
.apps .act::after { left: 12px; width: 17px; background: #a44bb8; }
.tray { display: flex; align-items: center; font-size: 12.600px; letter-spacing: -.05px; line-height: 17.500px; color: #222; }
.y-up { width: 13px; height: 9px; margin-left: 80px; transform: scaleY(-1); }
.y-cl { width: 18px; height: 15px; margin-left: 21px; }
.y-mic { width: 13px; height: 19px; margin-left: 19px; }
.lang { width: 26px; margin-left: 23px; text-align: center; }
.y-net { width: 18px; height: 18px; margin-left: 21px; }
.y-snd { width: 18px; height: 16px; margin-left: 8px; }
.y-bat { width: 18px; height: 15px; margin-left: 8px; }
.clock { width: 70px; margin-left: 14px; text-align: right; }
.y-bell { width: 14px; height: 17px; margin-left: 9px; }
```
